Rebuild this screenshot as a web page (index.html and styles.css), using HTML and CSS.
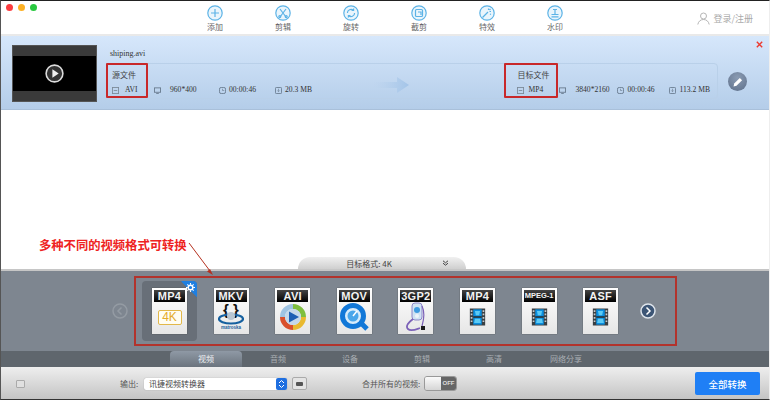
FILE: index.html
```html
<!DOCTYPE html>
<html lang="zh-CN">
<head>
    <meta charset="UTF-8">
    <meta name="viewport" content="width=device-width, initial-scale=1.0">
    <title>视频转换器</title>
    <link rel="stylesheet" href="styles.css">
</head>
<body>

<svg class="defs" width="0" height="0">
    <symbol id="film" viewBox="0 0 20 20">
        <rect x="1" y="0" width="18" height="20" fill="#3a3f42"/>
        <rect x="5" y="1" width="10" height="18" fill="#0a8fe0"/>
        <rect x="5" y="9" width="10" height="2" fill="#27363f"/>
        <path d="M7 3h6l-1 5h-4zM7 12h6l1 5H6z" fill="#5ccbf5"/>
        <path d="M2 2h2v2H2zM2 6h2v2H2zM2 10h2v2H2zM2 14h2v2H2zM16 2h2v2h-2zM16 6h2v2h-2zM16 10h2v2h-2zM16 14h2v2h-2z" fill="#c6ccd0"/>
    </symbol>
    <symbol id="i-format" viewBox="0 0 8 8">
        <rect x=".5" y=".5" width="7" height="7" fill="none" stroke="#7c8a99"/>
        <path d="M2 4h4" stroke="#7c8a99"/>
    </symbol>
    <symbol id="i-screen" viewBox="0 0 8 8">
        <rect x=".5" y="1" width="7" height="5" fill="none" stroke="#66788b"/>
        <path d="M2.5 7.5h3" stroke="#66788b"/>
    </symbol>
    <symbol id="i-clock" viewBox="0 0 8 8">
        <rect x=".5" y=".5" width="7" height="7" rx="2" fill="none" stroke="#66788b"/>
        <path d="M4 2v2h2" fill="none" stroke="#66788b" stroke-width=".7"/>
    </symbol>
    <symbol id="i-size" viewBox="0 0 8 8">
        <rect x=".5" y=".5" width="7" height="7" rx="1" fill="none" stroke="#66788b"/>
        <path d="M4 2v3M2.8 4 4 5.4 5.2 4" fill="none" stroke="#66788b" stroke-width=".7"/>
    </symbol>
</svg>

<div class="window">

    <header class="toolbar">
        <div class="lights">
            <span class="light red"></span>
            <span class="light yellow"></span>
            <span class="light green"></span>
        </div>
        <nav class="tools">
            <div class="tool">
                <svg class="tool-icon" viewBox="0 0 16 16"><circle cx="8" cy="8" r="7.2"/><path d="M8 4v8M4 8h8"/></svg>
                <span>添加</span>
            </div>
            <div class="tool">
                <svg class="tool-icon" viewBox="0 0 16 16"><circle cx="8" cy="8" r="7.2"/><path d="M5 4l6 8M11 4l-6 8"/><circle cx="4.8" cy="11.6" r="1"/><circle cx="11.2" cy="11.6" r="1"/></svg>
                <span>剪辑</span>
            </div>
            <div class="tool">
                <svg class="tool-icon" viewBox="0 0 16 16"><circle cx="8" cy="8" r="7.2"/><path d="M4.4 8a3.6 3.6 0 0 1 6-2.7M11.6 8a3.6 3.6 0 0 1-6 2.7M10.6 3.4v2.1H8.5M5.4 12.600v-2.100h2.100"/></svg>
                <span>旋转</span>
            </div>
            <div class="tool">
                <svg class="tool-icon" viewBox="0 0 16 16"><circle cx="8" cy="8" r="7.2"/><rect x="4.500" y="4.500" width="7" height="7" rx="1"/><path d="M7 7h3v3"/></svg>
                <span>截剪</span>
            </div>
            <div class="tool">
                <svg class="tool-icon" viewBox="0 0 16 16"><circle cx="8" cy="8" r="7.2"/><path d="M3.500 12.500 9 7"/><path d="M9.500 3.500v1.500M12 6.500h-1.500M11.500 4l-1 1M12 9.500l-1-.5"/></svg>
                <span>特效</span>
            </div>
            <div class="tool">
                <svg class="tool-icon" viewBox="0 0 16 16"><circle cx="8" cy="8" r="7.2"/><path d="M6 4.500h4M8 4.500v4.500M4.500 9.500h7M4.500 11.800h7"/></svg>
                <span>水印</span>
            </div>
        </nav>
        <div class="user">
            <svg class="user-icon" viewBox="0 0 13 13"><circle cx="6.500" cy="4" r="3"/><path d="M.8 12.500c.6-3.200 2.800-5 5.700-5s5.100 1.800 5.700 5"/></svg>
            <span>登录/注册</span>
        </div>
    </header>

    <div class="strip"></div>

    <section class="file-row">
        <div class="thumb">
            <div class="thumb-video">
                <svg class="play" viewBox="0 0 20 20"><circle cx="10" cy="10" r="8" fill="#333" stroke="#ddd" stroke-width="1.500"/><path d="M8 6l6 4-6 4z" fill="#eee"/></svg>
            </div>
        </div>
        <div class="file-info">
            <div class="file-name">shiping.avi</div>
            <div class="file-box">
                <div class="source">
                    <div class="box-title">源文件</div>
                    <div class="meta"><svg class="meta-icon"><use href="#i-format"/></svg><span class="format-name">AVI</span></div>
                </div>
                <div class="meta cell-res"><svg class="meta-icon"><use href="#i-screen"/></svg><span class="gap-wide">960*400</span></div>
                <div class="meta cell-time"><svg class="meta-icon"><use href="#i-clock"/></svg><span>00:00:46</span></div>
                <div class="meta"><svg class="meta-icon"><use href="#i-size"/></svg><span>20.3 MB</span></div>
                <div class="arrow-wrap">
                    <svg class="convert-arrow" viewBox="0 0 36 16">
                        <defs><linearGradient id="fade"><stop offset="0" stop-color="#b6d0ec" stop-opacity="0"/><stop offset="1" stop-color="#a3c4e8"/></linearGradient></defs>
                        <path d="M0 5h24V0l12 8-12 8v-5H0z" fill="url(#fade)"/>
                    </svg>
                </div>
                <div class="target">
                    <div class="box-title">目标文件</div>
                    <div class="meta"><svg class="meta-icon"><use href="#i-format"/></svg><span class="format-name">MP4</span></div>
                </div>
                <div class="meta cell-res-t"><svg class="meta-icon"><use href="#i-screen"/></svg><span class="gap-wide">3840*2160</span></div>
                <div class="meta cell-time-t"><svg class="meta-icon"><use href="#i-clock"/></svg><span>00:00:46</span></div>
                <div class="meta"><svg class="meta-icon"><use href="#i-size"/></svg><span>113.2 MB</span></div>
            </div>
        </div>
        <div class="edit-btn">
            <svg viewBox="0 0 12 12"><path d="M1.500 10.500l.7-3L7.800 1.900l2.300 2.300-5.600 5.600z" fill="#fff"/></svg>
        </div>
        <svg class="close-x" viewBox="0 0 7 7"><path d="M.8.800l5.400 5.400M6.200.800.800 6.200"/></svg>
    </section>

    <main class="empty">
        <div class="note">多种不同的视频格式可转换</div>
        <svg class="note-arrow" viewBox="0 0 30 36"><path d="M1 1l21 28" fill="none" stroke="#b5301f"/><path d="M25 33l-6-3.500 3-2.500z" fill="#b5301f"/></svg>
        <div class="format-tab">
            <span>目标格式: 4K</span>
            <svg class="tab-chevrons" viewBox="0 0 7 6"><path d="M1 .800l2.500 2 2.500-2M1 3.200l2.500 2 2.500-2"/></svg>
        </div>
    </main>

    <section class="format-panel">
        <svg class="nav-arrow dim" viewBox="0 0 16 16"><circle cx="8" cy="8" r="7"/><path d="M9.500 4.500 6 8l3.500 3.500"/></svg>
        <div class="format-list">
            <div class="format selected">
                <div class="card">
                    <div class="card-label">MP4</div>
                    <div class="card-art"><span class="badge-4k">4K</span></div>
                </div>
                <div class="corner"></div>
                <svg class="gear" viewBox="0 0 10 10"><circle cx="5" cy="5" r="2.600" fill="none" stroke="#fff" stroke-width="1.600"/><path d="M5 0v2M5 8v2M0 5h2M8 5h2M1.500 1.500l1.400 1.400M7.100 7.100l1.400 1.400M8.500 1.500 7.100 2.900M2.900 7.100 1.500 8.500" stroke="#fff" stroke-width="1.200"/></svg>
            </div>
            <div class="format">
                <div class="card">
                    <div class="card-label">MKV</div>
                    <div class="card-art">
                        <svg class="art" viewBox="0 0 30 30">
                            <text x="15" y="13" text-anchor="middle" class="mkv-braces">{ }</text>
                            <ellipse cx="15" cy="17" rx="12" ry="4.500" fill="none" stroke="#16609f" stroke-width="2.200"/>
                            <ellipse cx="15" cy="14" rx="4" ry="4" fill="#b9c6d2"/>
                            <text x="15" y="27" text-anchor="middle" class="mkv-name">matroska</text>
                        </svg>
                    </div>
                </div>
            </div>
            <div class="format">
                <div class="card">
                    <div class="card-label">AVI</div>
                    <div class="card-art">
                        <svg class="art" viewBox="0 0 30 30">
                            <circle cx="15" cy="15" r="13" fill="#e6edf2"/>
                            <path d="M15 2a13 13 0 0 1 13 13h-5a8 8 0 0 0-8-8z" fill="#7fbf3f"/>
                            <path d="M28 15a13 13 0 0 1-13 13v-5a8 8 0 0 0 8-8z" fill="#e9b92f"/>
                            <path d="M15 28A13 13 0 0 1 2 15h5a8 8 0 0 0 8 8z" fill="#d9502c"/>
                            <path d="M2 15A13 13 0 0 1 15 2v5a8 8 0 0 0-8 8z" fill="#9fc3e2"/>
                            <circle cx="15" cy="15" r="8" fill="#c5d8ea"/>
                            <path d="M11 9.500l10 5.500-10 5.500z" fill="#1d5fb4"/>
                        </svg>
                    </div>
                </div>
            </div>
            <div class="format">
                <div class="card">
                    <div class="card-label">MOV</div>
                    <div class="card-art">
                        <svg class="art" viewBox="0 0 30 30">
                            <circle cx="14" cy="14" r="10.500" fill="#d7ecfb" stroke="#1278d8" stroke-width="5"/>
                            <path d="M22 21l6 6" stroke="#1278d8" stroke-width="5"/>
                            <circle cx="14" cy="14" r="5.500" fill="#4aa6ea"/>
                            <path d="M14 14l4-5" stroke="#fff" stroke-width="1.500"/>
                        </svg>
                    </div>
                </div>
            </div>
            <div class="format">
                <div class="card">
                    <div class="card-label">3GP2</div>
                    <div class="card-art">
                        <svg class="art" viewBox="0 0 30 30">
                            <rect x="11" y="1" width="10" height="17" rx="3" fill="#cfe2f3" stroke="#8d86c8"/>
                            <circle cx="16" cy="8" r="3" fill="#3e9be0"/>
                            <circle cx="16" cy="14" r="2" fill="#eef4fa"/>
                            <path d="M12 17C8 20 4 24 7 27s9 0 12-1" fill="none" stroke="#7c62b8" stroke-width="1.800"/>
                            <path d="M21 4c3 6 2 13 0 20" fill="none" stroke="#7c62b8" stroke-width="1.200"/>
                            <rect x="20" y="24" width="4" height="4" fill="#1b1b1b"/>
                        </svg>
                    </div>
                </div>
            </div>
            <div class="format">
                <div class="card">
                    <div class="card-label">MP4</div>
                    <div class="card-art"><svg class="art-film"><use href="#film"/></svg></div>
                </div>
            </div>
            <div class="format">
                <div class="card">
                    <div class="card-label label-small">MPEG-1</div>
                    <div class="card-art"><svg class="art-film"><use href="#film"/></svg></div>
                </div>
            </div>
            <div class="format">
                <div class="card">
                    <div class="card-label">ASF</div>
                    <div class="card-art"><svg class="art-film"><use href="#film"/></svg></div>
                </div>
            </div>
            <svg class="nav-arrow next" viewBox="0 0 16 16"><circle cx="8" cy="8" r="7"/><path d="M6.500 4.500 10 8l-3.500 3.500"/></svg>
        </div>
    </section>

    <nav class="tabs">
        <div class="tab active">视频</div>
        <div class="tab">音频</div>
        <div class="tab">设备</div>
        <div class="tab">剪辑</div>
        <div class="tab">高清</div>
        <div class="tab">网络分享</div>
    </nav>

    <footer class="bottom">
        <div class="small-btn"></div>
        <span class="out-label">输出:</span>
        <div class="select">
            <span>讯捷视频转换器</span>
            <svg class="stepper" viewBox="0 0 11 12"><rect width="11" height="12" rx="2" fill="#1f6fe0"/><path d="M3 5l2.500-2.500L8 5M3 7l2.500 2.500L8 7" fill="none" stroke="#fff"/></svg>
        </div>
        <div class="folder-btn"><span></span></div>
        <span class="merge-label">合并所有的视频:</span>
        <div class="switch"><div class="knob"></div><div class="off">OFF</div></div>
        <button class="convert-btn">全部转换</button>
    </footer>

</div>

</body>
</html>
```

FILE: styles.css
```css
* {
    box-sizing: border-box;
}

html, body {
    margin: 0;
    padding: 0;
    background: #fff;
}

body {
    font-family: "Liberation Serif", "Noto Sans CJK SC", serif;
    color: #444;
}

.defs {
    position: absolute;
}

.window {
    width: 770px;
    height: 400px;
    display: flex;
    flex-direction: column;
    overflow: hidden;
    position: relative;
    border-top: 1px solid #222;
    border-left: 1px solid #555;
    border-bottom: 1px solid #333;
    border-right: 1px solid #eee;
    font-family: "Noto Sans CJK SC", sans-serif;
}

/* toolbar */
.toolbar {
    height: 33px;
    flex-shrink: 0;
    display: flex;
    background: #fff;
}

.lights {
    width: 180px;
    display: flex;
    gap: 5px;
    padding: 3px 0 0 5px;
}

.light {
    width: 7px;
    height: 7px;
    border-radius: 50%;
}

.light.red { background: #fc3c3f; }
.light.yellow { background: #fdb124; }
.light.green { background: #2ac940; }

.tools {
    display: flex;
}

.tool {
    width: 68px;
    display: flex;
    flex-direction: column;
    align-items: center;
    padding-top: 4px;
    font-size: 8px;
    line-height: 10px;
    color: #666;
}

.tool-icon {
    width: 16px;
    height: 16px;
    margin-bottom: 1px;
    fill: none;
    stroke: #5cb3e6;
    stroke-width: 1.200;
}

.tool-icon circle:first-child {
    fill: #eaf5fc;
}

.user {
    margin-left: auto;
    margin-right: 16px;
    display: flex;
    align-items: center;
    gap: 3px;
    font-size: 9px;
    color: #aaa;
    padding-top: 2px;
}

.user-icon {
    width: 13px;
    height: 13px;
    fill: none;
    stroke: #b5b5b5;
}

.strip {
    height: 2px;
    flex-shrink: 0;
    background: #e9e9e9;
}

/* file row */
.file-row {
    height: 74px;
    flex-shrink: 0;
    position: relative;
    display: flex;
    padding: 9px 0 0 11px;
    background: linear-gradient(#d6e7fb, #b4cde9);
    border-bottom: 1px solid #a9c0da;
}

.thumb {
    width: 85px;
    height: 57px;
    padding: 10px 0;
    background: #3a3a3a;
    border: 1px solid #555;
}

.thumb-video {
    height: 100%;
    background: #000;
    display: flex;
    align-items: center;
    justify-content: center;
}

.play {
    width: 21px;
    height: 21px;
}

.file-info {
    margin-left: 9px;
    width: 612px;
}

.file-name {
    font-family: "Liberation Serif", serif;
    font-size: 8px;
    line-height: 10px;
    height: 14px;
    margin-top: 4px;
    padding-left: 4px;
    color: #333;
}

.file-box {
    height: 36px;
    display: flex;
    align-items: flex-end;
    padding: 0 7px 3px 0;
    border: 1px solid #b9d0e9;
    border-radius: 4px;
    font-family: "Liberation Serif", serif;
    font-size: 7.600px;
    color: #333;
}

.meta {
    display: flex;
    align-items: center;
    gap: 3px;
    line-height: 10px;
    white-space: nowrap;
}

.meta-icon {
    width: 7px;
    height: 7px;
}

.gap-wide {
    margin-left: 6px;
}

.format-name {
    margin-left: 3px;
}

.source, .target {
    position: relative;
    align-self: stretch;
    margin: -1px 0 -3px -1px;
    padding: 4px 0 0 4px;
    border: 2px solid #c8282a;
    border-radius: 1px;
}

.source {
    width: 42px;
    margin-right: 6px;
}

.target {
    width: 54px;
    margin-right: 1px;
    padding-left: 11px;
}

.box-title {
    font-family: "Noto Sans CJK SC", sans-serif;
    font-size: 8px;
    line-height: 12px;
    margin-bottom: 4px;
    color: #444;
}

.target .format-name {
    margin-left: 1px;
}

.cell-res { width: 65px; }
.cell-time { width: 56px; }
.cell-res-t { width: 58px; }
.cell-time-t { width: 52px; }

.arrow-wrap {
    flex: 1;
    align-self: center;
    display: flex;
    justify-content: center;
    padding: 10px 36px 0 0;
}

.convert-arrow {
    width: 36px;
    height: 16px;
}

.edit-btn {
    width: 19px;
    height: 19px;
    margin: 27px 0 0 10px;
    border-radius: 50%;
    background: radial-gradient(circle at 50% 30%, #8b9cb3, #5d6f8a);
    display: flex;
    align-items: center;
    justify-content: center;
}

.edit-btn svg {
    width: 12px;
    height: 12px;
}

.close-x {
    position: absolute;
    top: 5px;
    right: 6px;
    width: 7px;
    height: 7px;
    stroke: #ec3b30;
    stroke-width: 1.400;
}

/* middle */
.empty {
    height: 161px;
    flex-shrink: 0;
    position: relative;
    display: flex;
    justify-content: center;
    align-items: flex-end;
    background: #fff;
    border-bottom: 2px solid #c6c6c6;
}

.note {
    position: absolute;
    left: 38px;
    top: 127px;
    font-size: 12.300px;
    line-height: 16px;
    font-weight: 700;
    color: #ee2222;
    white-space: nowrap;
}

.note-arrow {
    position: absolute;
    left: 187px;
    top: 132px;
    width: 30px;
    height: 36px;
}

.format-tab {
    width: 168px;
    height: 12px;
    margin-right: 6px;
    position: relative;
    display: flex;
    justify-content: center;
    align-items: center;
    padding-right: 26px;
    font-size: 8px;
    color: #444;
    background: linear-gradient(#f0f0f0, #cfcfcf);
    border-radius: 12px 12px 0 0;
}

.tab-chevrons {
    position: absolute;
    right: 17px;
    top: 3px;
    width: 7px;
    height: 6px;
    fill: none;
    stroke: #444;
}

/* format panel */
.format-panel {
    height: 80px;
    flex-shrink: 0;
    display: flex;
    align-items: center;
    padding-left: 111px;
    background: #7e8690;
}

.nav-arrow {
    width: 16px;
    height: 16px;
    flex-shrink: 0;
    fill: none;
    stroke-width: 1.500;
}

.nav-arrow.dim {
    stroke: #949ba3;
    margin-right: 6px;
}

.nav-arrow.next {
    margin-left: 5px;
}

.nav-arrow.next circle {
    fill: #3d5676;
    stroke: #dfe5ec;
}

.nav-arrow.next path {
    stroke: #fff;
}

.format-list {
    width: 543px;
    height: 70px;
    display: flex;
    align-items: center;
    padding-left: 6px;
    border: 2px solid #b2332c;
}

.format {
    position: relative;
    width: 55px;
    height: 60px;
    margin-right: 6.600px;
    display: flex;
    align-items: center;
    justify-content: center;
    border-radius: 4px;
    overflow: hidden;
}

.format.selected {
    background: #686f78;
}

.corner {
    position: absolute;
    top: -11.500px;
    right: -11.500px;
    width: 23px;
    height: 23px;
    background: #1f7fe0;
    transform: rotate(45deg);
}

.gear {
    position: absolute;
    top: 2px;
    right: 2px;
    width: 9px;
    height: 9px;
}

.card {
    width: 35px;
    height: 46px;
    display: flex;
    flex-direction: column;
    padding: 2px;
    background: linear-gradient(#fff, #e6e6e6);
    box-shadow: 0 0 1px #444;
}

.card-label {
    height: 12px;
    flex-shrink: 0;
    background: linear-gradient(#444, #000);
    color: #f2f2f2;
    font-family: "Liberation Sans", sans-serif;
    font-size: 11px;
    font-weight: 700;
    line-height: 12px;
    text-align: center;
    letter-spacing: .3px;
    white-space: nowrap;
}

.label-small {
    font-size: 7.500px;
    letter-spacing: 0;
}

.card-art {
    flex: 1;
    display: flex;
    align-items: center;
    justify-content: center;
}

.art {
    width: 30px;
    height: 30px;
}

.art-film {
    width: 17px;
    height: 20px;
}

.badge-4k {
    width: 24px;
    height: 15px;
    border: 1px solid #e2b84a;
    border-radius: 2px;
    color: #e5ab2a;
    background: #fffdf2;
    font-family: "Liberation Sans", sans-serif;
    font-size: 12px;
    line-height: 13px;
    text-align: center;
}

.mkv-braces {
    font-family: "Liberation Sans", sans-serif;
    font-size: 15px;
    font-weight: 700;
    fill: #111;
}

.mkv-name {
    font-family: "Liberation Sans", sans-serif;
    font-size: 4.500px;
    font-weight: 700;
    fill: #1c5f9c;
}

/* tabs */
.tabs {
    height: 16px;
    flex-shrink: 0;
    display: flex;
    padding-left: 169px;
    background: #5f666d;
}

.tab {
    width: 72px;
    text-align: center;
    font-size: 8px;
    line-height: 16px;
    color: #a9aeb3;
}

.tab.active {
    color: #eef0f2;
    background: linear-gradient(#8f99a5, #6b747e);
    border-radius: 4px 4px 0 0;
}

/* bottom bar */
.bottom {
    flex: 1;
    min-height: 0;
    display: flex;
    align-items: center;
    background: linear-gradient(#ededed, #c4c4c4);
    border-top: 1px solid #eee;
    font-size: 8px;
    color: #555;
}

.small-btn {
    width: 9px;
    height: 8px;
    margin-left: 15px;
    background: #e0e0e0;
    border: 1px solid #aaa;
    border-radius: 1px;
}

.out-label {
    margin-left: 95px;
    width: 24px;
}

.select {
    width: 143px;
    height: 12px;
    display: flex;
    justify-content: space-between;
    align-items: center;
    padding-left: 5px;
    background: #fff;
    border-radius: 2px;
    color: #444;
    box-shadow: 0 0 1px #888;
}

.stepper {
    width: 11px;
    height: 12px;
}

.folder-btn {
    width: 15px;
    height: 13px;
    margin-left: 5px;
    display: flex;
    align-items: center;
    justify-content: center;
    background: #e4e4e4;
    border: 1px solid #aaa;
    border-radius: 2px;
}

.folder-btn span {
    width: 7px;
    height: 4px;
    background: #555;
    border-radius: 1px;
}

.merge-label {
    margin-left: 55px;
    width: 62px;
    white-space: nowrap;
}

.switch {
    width: 33px;
    height: 15px;
    display: flex;
    border: 1px solid #999;
    border-radius: 3px;
    overflow: hidden;
}

.knob {
    width: 16px;
    background: linear-gradient(#fafafa, #d5d5d5);
}

.off {
    flex: 1;
    background: #666;
    color: #ddd;
    font-family: "Liberation Sans", sans-serif;
    font-size: 6px;
    font-weight: 700;
    line-height: 13px;
    text-align: center;
}

.convert-btn {
    width: 65px;
    height: 23px;
    margin-left: auto;
    margin-right: 9px;
    border: none;
    border-radius: 2px;
    background: #1f7ff5;
    color: #fff;
    font-family: "Noto Sans CJK SC", sans-serif;
    font-size: 9.500px;
    font-weight: 500;
}
```
